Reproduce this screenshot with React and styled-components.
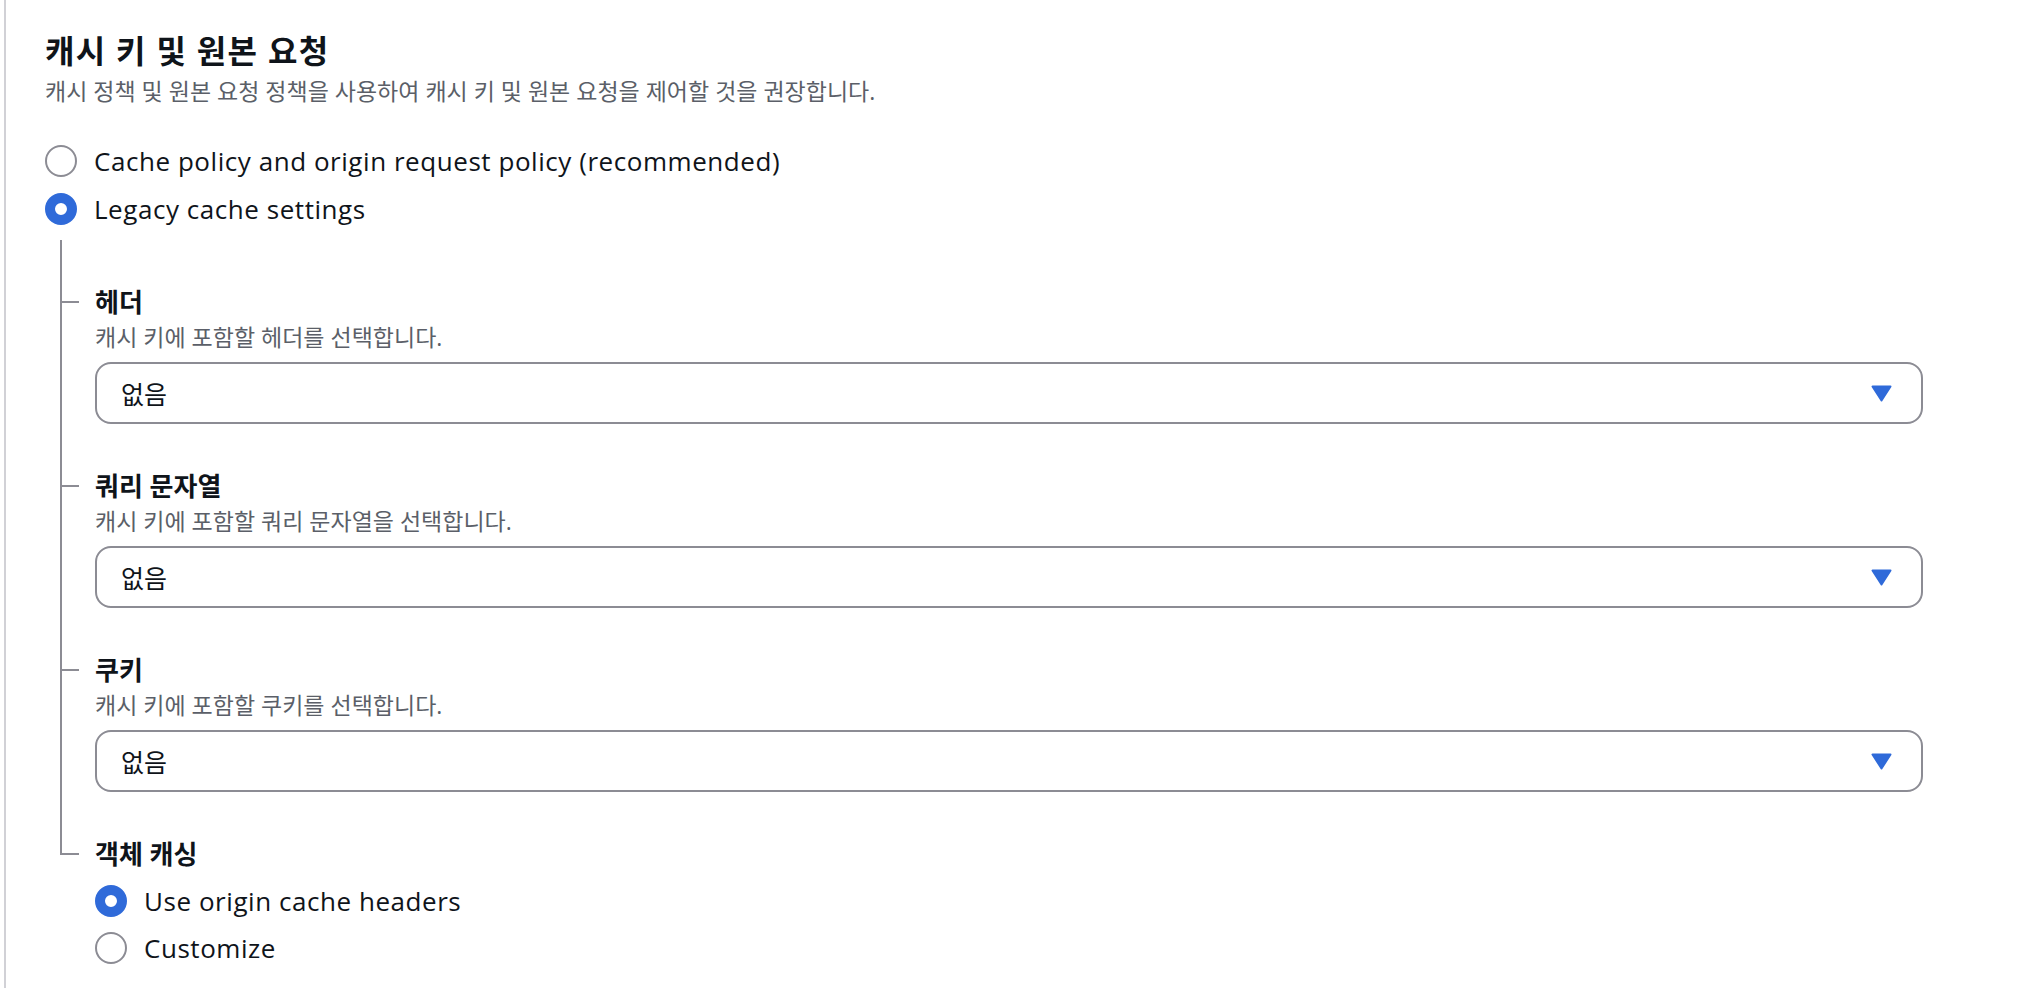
import React from 'react'
import styled, { createGlobalStyle } from 'styled-components'

const GlobalStyle = createGlobalStyle`
  body {
    margin: 0;
    background: #ffffff;
    font-family: "Open Sans", "Noto Sans CJK KR", sans-serif;
    color: #0f141a;
  }
`;

const BLUE = '#2f6ad9';
const GRAY = '#8c8c94';

const Page = styled.div`
  margin-left: 4px;
  min-height: 988px;
  box-sizing: border-box;
  border-left: 2px solid #d1d1d6;
  padding: 31px 111px 0 39px;
`;

const Title = styled.h2`
  margin: 0;
  font-size: 32px;
  line-height: 40px;
  font-weight: 700;
  letter-spacing: 1.3px;
  color: #0f141a;
`;

const Subtitle = styled.p`
  margin: 5px 0 0;
  font-size: 23px;
  line-height: 30px;
  color: #5b5f68;
`;

const RadioList = styled.div`
  display: flex;
  flex-direction: column;
  gap: ${p => p.$gap || 8}px;
  margin-top: ${p => p.$top || 0}px;
`;

const RadioRow = styled.label`
  display: flex;
  align-items: center;
  gap: 17px;
  height: 40px;
  font-size: 26px;
  letter-spacing: 0.55px;
  color: #0f141a;
`;

const RadioDot = styled.span`
  flex: none;
  box-sizing: border-box;
  width: 32px;
  height: 32px;
  border-radius: 50%;
  border: ${p => (p.$checked ? `10px solid ${BLUE}` : `2px solid ${GRAY}`)};
  background: #ffffff;
`;

const Tree = styled.div`
  margin: 11px 0 0 15px;
`;

const TreeItem = styled.div`
  position: relative;
  padding: 46px 0 0 35px;

  &::before {
    content: '';
    position: absolute;
    left: 0;
    top: 0;
    width: 2px;
    height: ${p => (p.$last ? '63px' : '100%')};
    background: ${GRAY};
  }

  &::after {
    content: '';
    position: absolute;
    left: 0;
    top: 61px;
    width: 19px;
    height: 2px;
    background: ${GRAY};
  }
`;

const FieldLabel = styled.div`
  font-size: 26px;
  line-height: 32px;
  font-weight: 700;
  color: #0f141a;
`;

const FieldDesc = styled.div`
  margin-top: 4px;
  font-size: 23px;
  line-height: 30px;
  color: #5b5f68;
`;

const Select = styled.div`
  margin-top: 10px;
  height: 62px;
  box-sizing: border-box;
  border: 2px solid ${GRAY};
  border-radius: 16px;
  display: flex;
  align-items: center;
  justify-content: space-between;
  padding: 0 29px 0 24px;
  font-size: 25px;
  color: #0f141a;
`;

const Caret = styled.svg`
  width: 21px;
  height: 17px;
  flex: none;
`;

function Radio({ checked, children }) {
  return (
    <RadioRow>
      <RadioDot $checked={checked} />
      {children}
    </RadioRow>
  )
}

function SelectField({ label, desc }) {
  return (
    <TreeItem>
      <FieldLabel>{label}</FieldLabel>
      <FieldDesc>{desc}</FieldDesc>
      <Select>
        <span>없음</span>
        <Caret viewBox="0 0 21 17">
          <path d="M1.5 1.5 H19.5 L10.5 15.5 Z" fill={BLUE} stroke={BLUE} strokeWidth="2" strokeLinejoin="round" />
        </Caret>
      </Select>
    </TreeItem>
  )
}

export default function App() {
  return (
    <>
      <GlobalStyle />
      <Page>
        <Title>캐시 키 및 원본 요청</Title>
        <Subtitle>캐시 정책 및 원본 요청 정책을 사용하여 캐시 키 및 원본 요청을 제어할 것을 권장합니다.</Subtitle>

        <RadioList $top={35}>
          <Radio>Cache policy and origin request policy (recommended)</Radio>
          <Radio checked>Legacy cache settings</Radio>
        </RadioList>

        <Tree>
          <SelectField label="헤더" desc="캐시 키에 포함할 헤더를 선택합니다." />
          <SelectField label="쿼리 문자열" desc="캐시 키에 포함할 쿼리 문자열을 선택합니다." />
          <SelectField label="쿠키" desc="캐시 키에 포함할 쿠키를 선택합니다." />
          <TreeItem $last>
            <FieldLabel>객체 캐싱</FieldLabel>
            <RadioList $top={11} $gap={7}>
              <Radio checked>Use origin cache headers</Radio>
              <Radio>Customize</Radio>
            </RadioList>
          </TreeItem>
        </Tree>
      </Page>
    </>
  )
}
